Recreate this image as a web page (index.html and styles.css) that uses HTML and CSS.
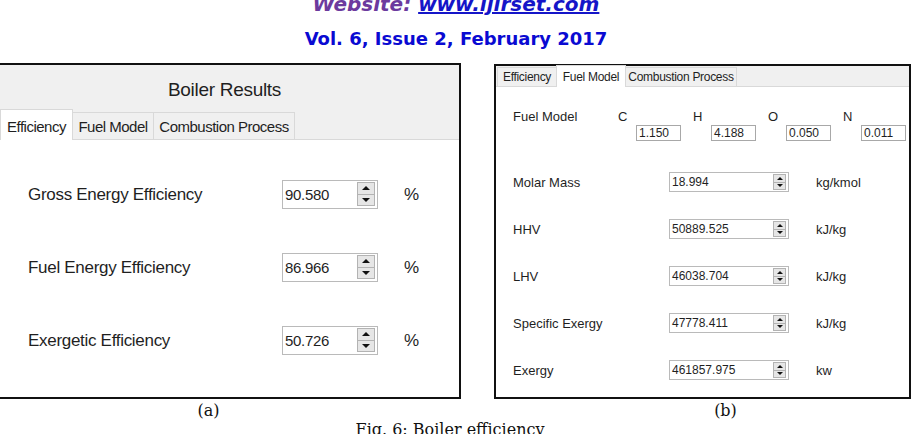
FILE: index.html
```html
<!DOCTYPE html>
<html lang="en">
<head>
    <meta charset="UTF-8">
    <meta name="viewport" content="width=device-width, initial-scale=1.0">
    <title>Boiler efficiency</title>
    <link rel="stylesheet" href="styles.css">
</head>
<body>
    <header class="journal">
        <p class="site">Website: <a href="#">www.ijirset.com</a></p>
        <p class="issue">Vol. 6, Issue 2, February 2017</p>
    </header>

    <div class="figures">
        <!-- (a) efficiency tab -->
        <div class="fig fig-a">
            <div class="panel panel-a">
                <div class="panel-head">
                    <div class="form-title">Boiler Results</div>
                    <div class="tabs">
                        <div class="tab active" style="width: 73px">Efficiency</div>
                        <div class="tab" style="width: 82px">Fuel Model</div>
                        <div class="tab" style="width: 142px">Combustion Process</div>
                    </div>
                </div>
                <div class="eff-body">
                    <div class="label">Gross Energy Efficiency</div>
                    <div class="field">
                        <span>90.580</span>
                        <div class="spin"><span class="up"></span><span class="down"></span></div>
                    </div>
                    <div></div>
                    <div class="label">%</div>

                    <div class="label">Fuel Energy Efficiency</div>
                    <div class="field">
                        <span>86.966</span>
                        <div class="spin"><span class="up"></span><span class="down"></span></div>
                    </div>
                    <div></div>
                    <div class="label">%</div>

                    <div class="label">Exergetic Efficiency</div>
                    <div class="field">
                        <span>50.726</span>
                        <div class="spin"><span class="up"></span><span class="down"></span></div>
                    </div>
                    <div></div>
                    <div class="label">%</div>
                </div>
            </div>
            <div class="caption caption-a">(a)</div>
        </div>

        <!-- (b) fuel model tab -->
        <div class="fig fig-b">
            <div class="panel panel-b">
                <div class="tabs tabs-sm">
                    <div class="tab" style="width: 60px">Efficiency</div>
                    <div class="tab active" style="width: 70px">Fuel Model</div>
                    <div class="tab" style="width: 112px">Combustion Process</div>
                </div>
                <div class="fuel-body">
                    <div class="fuel-row">
                        <div class="fuel-label">Fuel Model</div>
                        <div class="element"><span class="sym">C</span><span class="mini-box">1.150</span></div>
                        <div class="element"><span class="sym">H</span><span class="mini-box">4.188</span></div>
                        <div class="element"><span class="sym">O</span><span class="mini-box">0.050</span></div>
                        <div class="element"><span class="sym">N</span><span class="mini-box">0.011</span></div>
                    </div>
                    <div class="props">
                        <div>Molar Mass</div>
                        <div class="field field-sm">
                            <span>18.994</span>
                            <div class="spin"><span class="up"></span><span class="down"></span></div>
                        </div>
                        <div></div>
                        <div>kg/kmol</div>

                        <div>HHV</div>
                        <div class="field field-sm">
                            <span>50889.525</span>
                            <div class="spin"><span class="up"></span><span class="down"></span></div>
                        </div>
                        <div></div>
                        <div>kJ/kg</div>

                        <div>LHV</div>
                        <div class="field field-sm">
                            <span>46038.704</span>
                            <div class="spin"><span class="up"></span><span class="down"></span></div>
                        </div>
                        <div></div>
                        <div>kJ/kg</div>

                        <div>Specific Exergy</div>
                        <div class="field field-sm">
                            <span>47778.411</span>
                            <div class="spin"><span class="up"></span><span class="down"></span></div>
                        </div>
                        <div></div>
                        <div>kJ/kg</div>

                        <div>Exergy</div>
                        <div class="field field-sm">
                            <span>461857.975</span>
                            <div class="spin"><span class="up"></span><span class="down"></span></div>
                        </div>
                        <div></div>
                        <div>kw</div>
                    </div>
                </div>
            </div>
            <div class="caption caption-b">(b)</div>
        </div>
    </div>

    <p class="fig-title">Fig. 6: Boiler efficiency</p>
</body>
</html>
```

FILE: styles.css
```css
* {
    box-sizing: border-box;
    margin: 0;
    padding: 0;
}
body {
    width: 912px;
    height: 434px;
    overflow: hidden;
    background: #fff;
    font-family: 'Liberation Sans', Arial, sans-serif;
    color: #1f1f1f;
}

/* journal header */
.journal {
    text-align: center;
    font-family: 'DejaVu Sans', Verdana, sans-serif;
    font-weight: bold;
}
.site {
    margin-top: -6px;
    font-size: 20px;
    line-height: 20px;
    font-style: italic;
    color: #6c3a9e;
}
.site a {
    color: #1515c8;
}
.issue {
    margin-top: 14px;
    font-size: 18px;
    line-height: 22px;
    color: #0a0ad2;
}

/* figure row */
.figures {
    display: flex;
    align-items: flex-start;
    margin-top: 13px;
}
.fig-a {
    width: 461px;
}
.fig-b {
    width: 417px;
    margin-left: 33px;
}
.panel {
    border: 2px solid #111;
    background: #fff;
    display: flex;
    flex-direction: column;
}
.panel-a {
    height: 336px;
    border-left: none;
}
.panel-b {
    height: 335px;
    margin-top: 1px;
}
.caption {
    margin-top: 3px;
    font-family: 'DejaVu Serif', 'Liberation Serif', serif;
    font-size: 16px;
    line-height: 18px;
    text-align: center;
    color: #111;
}
.caption-a {
    padding-right: 44px;
}
.caption-b {
    padding-left: 46px;
}
.fig-title {
    margin-top: 1px;
    padding-right: 12px;
    font-family: 'DejaVu Serif', 'Liberation Serif', serif;
    font-size: 16px;
    line-height: 18px;
    text-align: center;
    color: #111;
}

/* window chrome */
.panel-head {
    background: #f0f0f0;
}
.form-title {
    height: 45px;
    padding: 14px 10px 0 0;
    font-size: 19px;
    line-height: 22px;
    letter-spacing: -0.3px;
    text-align: center;
}
.tabs {
    display: flex;
    align-items: flex-end;
    height: 30px;
    border-bottom: 1px solid #d9d9d9;
}
.tab {
    display: flex;
    align-items: flex-end;
    justify-content: center;
    height: 27px;
    padding-bottom: 3px;
    margin-right: -1px;
    border: 1px solid #d9d9d9;
    border-bottom: none;
    background: #f0f0f0;
    font-size: 15px;
    line-height: 18px;
    letter-spacing: -0.5px;
    white-space: nowrap;
}
.tab.active {
    height: 31px;
    margin-bottom: -1px;
    padding-bottom: 4px;
    background: #fff;
    position: relative;
    z-index: 1;
}
.tabs-sm {
    height: 21px;
    padding-left: 1px;
    background: #f0f0f0;
}
.tabs-sm .tab {
    height: 19px;
    padding-bottom: 2px;
    font-size: 12px;
    line-height: 14px;
    letter-spacing: -0.3px;
}
.tabs-sm .tab.active {
    height: 22px;
    padding-bottom: 3px;
}

/* spin boxes */
.field {
    display: flex;
    align-items: center;
    justify-content: space-between;
    height: 29px;
    padding-left: 2px;
    border: 1px solid #bababa;
    background: #fff;
    font-size: 15px;
    letter-spacing: -0.3px;
}
.spin {
    display: flex;
    flex-direction: column;
    width: 18px;
    height: 24px;
    margin-right: 2px;
    margin-top: -1px;
}
.spin span {
    flex: 1;
    display: flex;
    align-items: center;
    justify-content: center;
    border: 1px solid #b3b3b3;
    background: #e6e6e6;
}
.spin span + span {
    border-top: none;
}
.spin .up::before {
    content: '';
    border-left: 4px solid transparent;
    border-right: 4px solid transparent;
    border-bottom: 4px solid #111;
}
.spin .down::before {
    content: '';
    border-left: 4px solid transparent;
    border-right: 4px solid transparent;
    border-top: 4px solid #111;
}
.field-sm {
    height: 20px;
    font-size: 12px;
    letter-spacing: 0;
}
.field-sm .spin {
    width: 13px;
    height: 16px;
    margin-top: 0;
}
.field-sm .spin .up::before {
    border-left-width: 3px;
    border-right-width: 3px;
    border-bottom-width: 3px;
}
.field-sm .spin .down::before {
    border-left-width: 3px;
    border-right-width: 3px;
    border-top-width: 3px;
}

/* efficiency tab */
.eff-body {
    flex: 1;
    display: grid;
    grid-template-columns: 254px 96px 26px auto;
    grid-auto-rows: 29px;
    row-gap: 44px;
    align-items: center;
    align-content: start;
    padding: 40px 0 0 28px;
}
.label {
    font-size: 17px;
    letter-spacing: -0.3px;
}

/* fuel model tab */
.fuel-body {
    flex: 1;
    padding: 22px 0 0 17px;
    font-size: 13px;
}
.fuel-row {
    display: flex;
    align-items: flex-start;
    line-height: 16px;
}
.fuel-row > * {
    flex-shrink: 0;
}
.fuel-label {
    width: 105px;
}
.element {
    display: flex;
    align-items: flex-start;
    margin-right: 12px;
}
.element:last-child {
    margin-right: 0;
}
.sym {
    width: 18px;
}
.mini-box {
    width: 45px;
    height: 16px;
    margin-top: 16px;
    padding-left: 2px;
    border: 1px solid #a8a8a8;
    font-size: 12px;
    line-height: 14px;
}
.props {
    display: grid;
    grid-template-columns: 156px 120px 27px auto;
    grid-auto-rows: 20px;
    row-gap: 27px;
    align-items: center;
    margin-top: 31px;
}
```
